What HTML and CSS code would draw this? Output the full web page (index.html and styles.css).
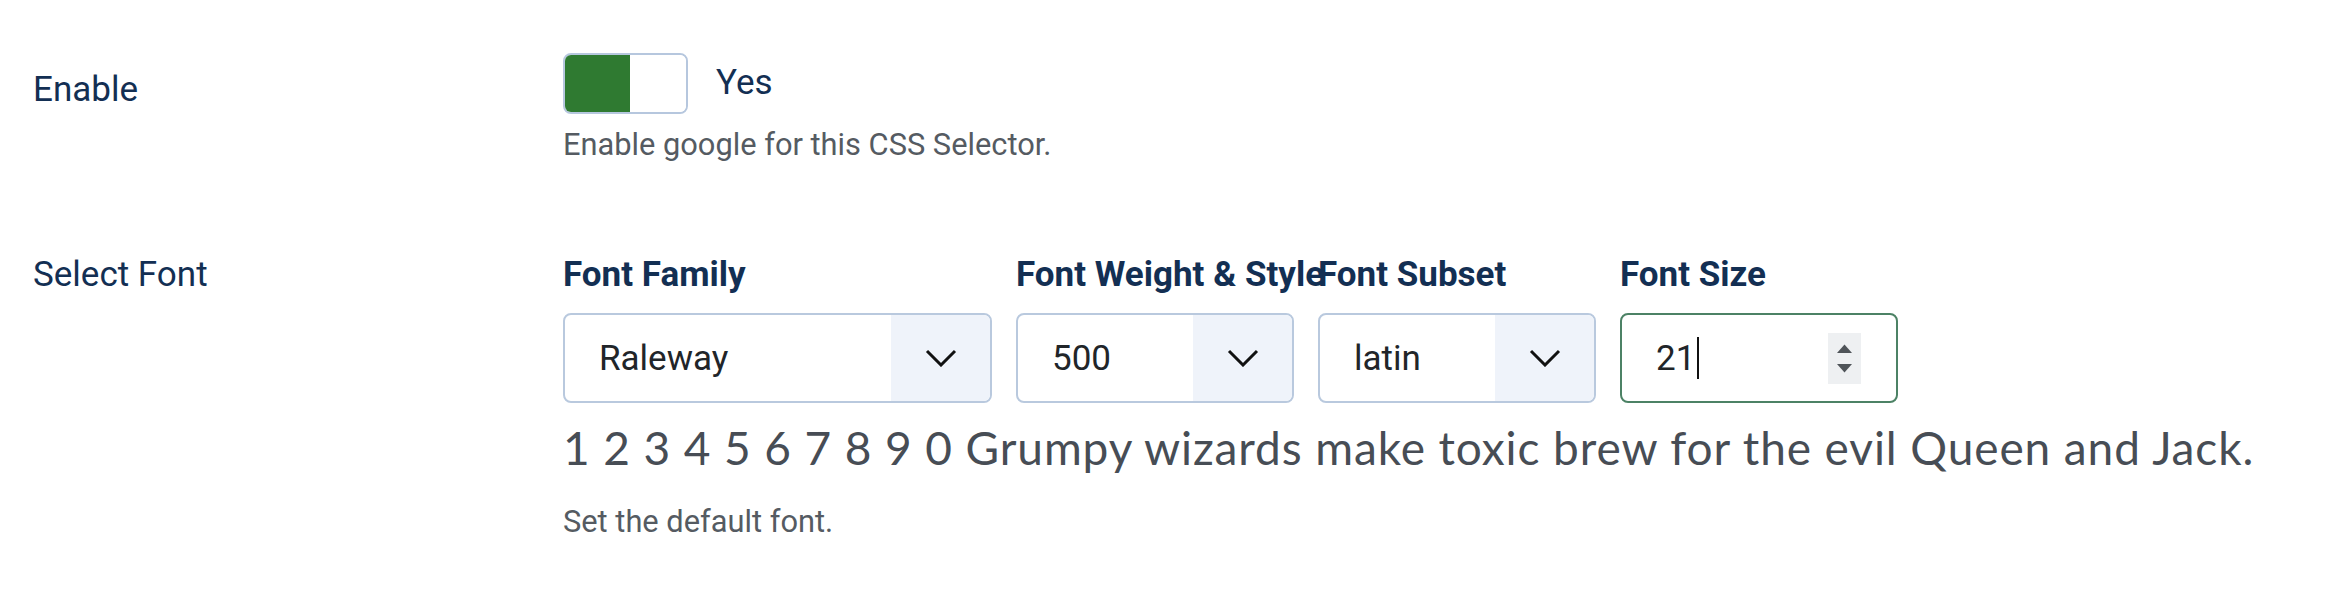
FILE: index.html
```html
<!DOCTYPE html>
<html lang="en">
<head>
<meta charset="utf-8">
<title>Font settings</title>
<link rel="stylesheet" href="styles.css">
</head>
<body>
<div class="form">
  <div class="field field-enable">
    <div class="label label-enable">Enable</div>
    <div class="controls">
      <div class="switch-line">
        <div class="switch"><span class="switch-on"></span><span class="switch-off"></span></div>
        <span class="switch-text">Yes</span>
      </div>
      <div class="help help-enable">Enable google for this CSS Selector.</div>
    </div>
  </div>

  <div class="field field-font">
    <div class="label label-font">Select Font</div>
    <div class="controls">
      <div class="font-grid">
        <div class="col-head">Font Family</div>
        <div class="col-head">Font Weight &amp; Style</div>
        <div class="col-head">Font Subset</div>
        <div class="col-head">Font Size</div>

        <div class="select">
          <span class="select-value">Raleway</span>
          <span class="select-arrow"><svg width="32" height="18" viewBox="0 0 32 18"><path d="M2 2 L16 16 L30 2" fill="none" stroke="#111" stroke-width="3"/></svg></span>
        </div>
        <div class="select">
          <span class="select-value">500</span>
          <span class="select-arrow"><svg width="32" height="18" viewBox="0 0 32 18"><path d="M2 2 L16 16 L30 2" fill="none" stroke="#111" stroke-width="3"/></svg></span>
        </div>
        <div class="select">
          <span class="select-value">latin</span>
          <span class="select-arrow"><svg width="32" height="18" viewBox="0 0 32 18"><path d="M2 2 L16 16 L30 2" fill="none" stroke="#111" stroke-width="3"/></svg></span>
        </div>
        <div class="number">
          <span class="number-value">21<span class="caret"></span></span>
          <span class="spinner">
            <svg width="15" height="9" viewBox="0 0 15 9"><path d="M0 9 L7.5 0.5 L15 9 Z" fill="#4f5459"/></svg>
            <svg width="15" height="9" viewBox="0 0 15 9"><path d="M0 0 L7.5 8.5 L15 0 Z" fill="#4f5459"/></svg>
          </span>
        </div>
      </div>
      <div class="preview">1 2 3 4 5 6 7 8 9 0 Grumpy wizards make toxic brew for the evil Queen and Jack.</div>
      <div class="help help-font">Set the default font.</div>
    </div>
  </div>
</div>
</body>
</html>
```

FILE: styles.css
```css
html, body {
  margin: 0;
  padding: 0;
  background: #ffffff;
}

body {
  font-family: Roboto, "Liberation Sans", sans-serif;
  color: #132f53;
  width: 2348px;
  height: 616px;
  overflow: hidden;
}

.form {
  padding-top: 53px;
}

.field {
  display: flex;
}

.label {
  width: 530px;
  padding-left: 33px;
  font-size: 35px;
  line-height: 52px;
  color: #132f53;
  flex: none;
}

.label-enable {
  padding-top: 11px;
}

.label-font {
  padding-top: 2px;
}

.controls {
  display: flex;
  flex-direction: column;
}

.switch-line {
  display: flex;
  align-items: center;
  gap: 28px;
}

.switch {
  display: flex;
  width: 125px;
  height: 61px;
  box-sizing: border-box;
  border: 2px solid #b6c7de;
  border-radius: 8px;
  overflow: hidden;
}

.switch-on {
  width: 65px;
  background: #2f7a31;
}

.switch-off {
  flex: 1;
  background: #ffffff;
}

.switch-text {
  font-size: 35px;
  line-height: 52px;
  margin-top: -1px;
  color: #132f53;
}

.help {
  font-size: 30.8px;
  line-height: 46px;
  color: #555b62;
}

.help-enable {
  margin-top: 8px;
}

.field-font {
  margin-top: 79px;
}

.font-grid {
  display: grid;
  grid-template-columns: 429px 278px 278px 278px;
  column-gap: 24px;
  row-gap: 12px;
}

.col-head {
  margin-top: 2px;
  font-size: 35px;
  font-weight: 700;
  line-height: 52px;
  color: #132f53;
  white-space: nowrap;
}

.select,
.number {
  display: flex;
  align-items: stretch;
  height: 90px;
  box-sizing: border-box;
  border: 2px solid #b9c9de;
  border-radius: 8px;
  overflow: hidden;
  background: #ffffff;
}

.select-value,
.number-value {
  flex: 1;
  display: flex;
  align-items: center;
  padding-left: 34px;
  font-size: 35px;
  color: #212529;
}

.select-arrow {
  width: 99px;
  display: flex;
  align-items: center;
  justify-content: center;
  background: #eff3fa;
}

.number {
  border-color: #4c8265;
  align-items: center;
}

.caret {
  display: inline-block;
  width: 2px;
  height: 42px;
  background: #111111;
  margin-left: 2px;
}

.spinner {
  width: 33px;
  height: 51px;
  margin-right: 35px;
  background: #eef0f2;
  display: flex;
  flex-direction: column;
  align-items: center;
  justify-content: center;
  gap: 11px;
}

.preview {
  margin-top: 10px;
  font-family: Lato, "Open Sans", sans-serif;
  font-size: 46px;
  font-weight: 400;
  letter-spacing: 0.9px;
  line-height: 69px;
  color: #474d55;
  white-space: nowrap;
}

.help-font {
  margin-top: 17px;
}
```
